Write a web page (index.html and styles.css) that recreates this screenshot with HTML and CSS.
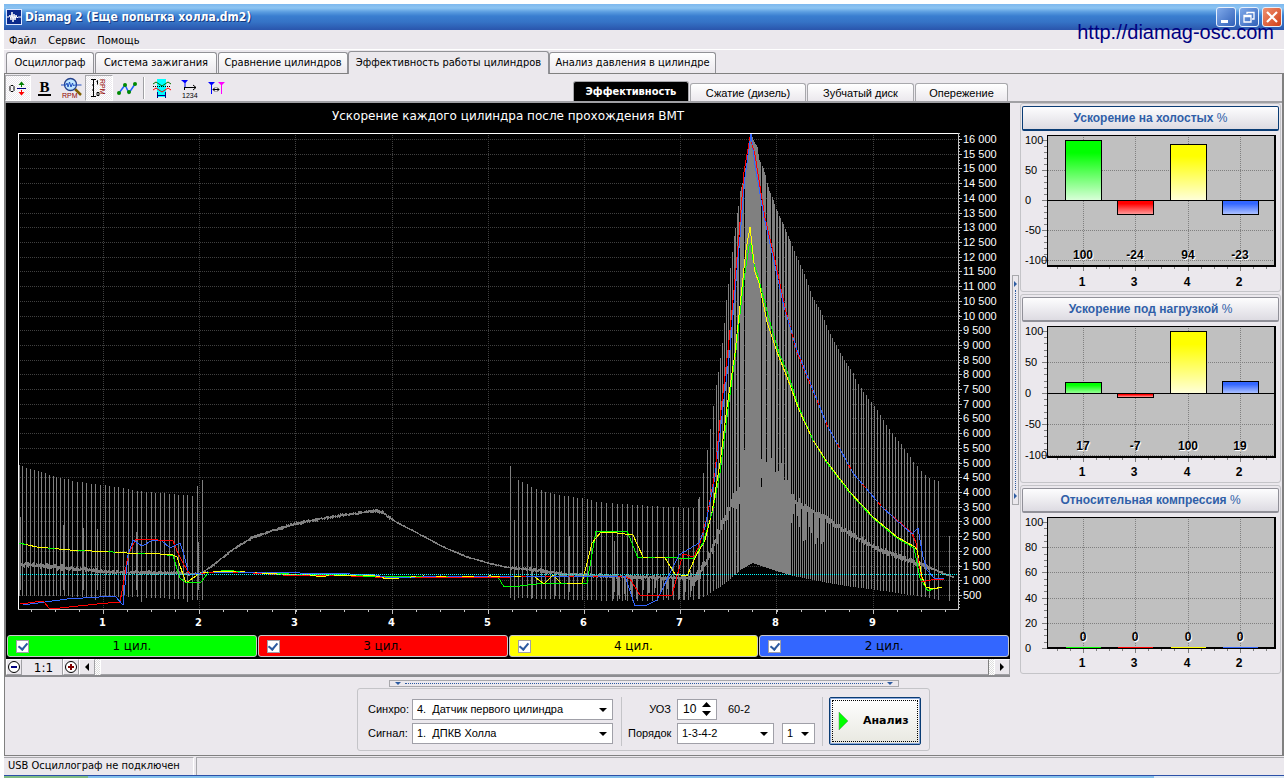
FILE: index.html
```html
<!DOCTYPE html>
<html lang="ru">
<head>
<meta charset="utf-8">
<title>Diamag 2</title>
<link rel="stylesheet" href="styles.css">
</head>
<body>
<div class="window">
  <header class="titlebar">
    <svg class="app-icon" width="16" height="16" viewBox="0 0 16 16"><rect width="16" height="16" fill="#dfe8ff"/><rect x="1" y="1" width="14" height="14" fill="#0a2a8c"/><path d="M1 8h2l1-2 1 5 1-8 1 10 1-8 1 6 1-5 1 3 1-1h3" fill="none" stroke="#fff"/></svg>
    <h1 class="title">Diamag 2 (Еще попытка холла.dm2)</h1>
    <div class="win-buttons">
      <button class="win-btn" aria-label="Свернуть"><svg width="18" height="18" viewBox="0 0 18 18"><path d="M4 12h7v3H4z" fill="#fff"/></svg></button>
      <button class="win-btn" aria-label="Восстановить"><svg width="18" height="18" viewBox="0 0 18 18"><path d="M7 6V4.500h7V11h-2M4 7.500h7V14H4zM4 8.500h7" fill="none" stroke="#fff" stroke-width="1.300"/></svg></button>
      <button class="win-btn win-close" aria-label="Закрыть"><svg width="18" height="18" viewBox="0 0 18 18"><path d="M4 4l10 10M14 4L4 14" stroke="#fff" stroke-width="2.200"/></svg></button>
    </div>
    <a class="site-link" href="#">http://diamag-osc.com</a>
  </header>

  <nav class="menu">
    <button>Файл</button><button>Сервис</button><button>Помощь</button>
  </nav>

  <nav class="tabs">
    <button class="tab tab-s">Осциллограф</button>
    <button class="tab tab-m">Система зажигания</button>
    <button class="tab tab-l">Сравнение цилиндров</button>
    <button class="tab tab-active">Эффективность работы цилиндров</button>
    <button class="tab tab-xl">Анализ давления в цилиндре</button>
  </nav>

  <main class="page">
    <div class="toolbar">
      <div class="tools">
        <button class="tool pressed" aria-label="Ноль"><svg width="18" height="22" viewBox="0 0 18 22"><path d="M2 8.500h2l1 1v4l-1 1H2l-1-1v-4z" fill="none" stroke="#000"/><path d="M8 11.500h9" stroke="#000080"/><path d="M12.500 10V6" stroke="#008000"/><path d="M9.500 8l3-3.500 3 3.500z" fill="#008000"/><path d="M12.500 13v4" stroke="red"/><path d="M9.500 15l3 3.500 3-3.500z" fill="red"/></svg></button>
        <button class="tool tool-b" aria-label="Жирный"><span class="bold-b">B</span></button>
        <button class="tool tool-wide" aria-label="Масштаб оборотов"><svg width="22" height="22" viewBox="0 0 22 22"><path d="M14 12l6 6" stroke="#806000" stroke-width="2.500"/><circle cx="9.500" cy="7.500" r="6" fill="#bfe6ff" stroke="#24408c" stroke-width="1.300"/><path d="M0 8h5l1-2 1 4 1.500-5 1.500 5 1.500-4 1 3 1-1h7" fill="none" stroke="#2050c0"/><text x="1" y="21" class="rpm">RPM</text></svg></button>
        <button class="tool tool-scale pressed" aria-label="Шкала оборотов"><svg width="18" height="22" viewBox="0 0 18 22"><path d="M1 2.500h5M1 19.500h5M3.500 3v16M2 8h1.500M2 13h1.500" stroke="#000" fill="none"/><path d="M6.500 4.500l1-1v4M7 15.500h2v3H7z" fill="none" stroke="#000"/><text x="2" y="-10" transform="rotate(90)" class="rpm">RPM</text></svg></button>
        <button class="tool tool-wide" aria-label="Точки"><svg width="22" height="22" viewBox="0 0 22 22"><path d="M3 16L9 8l4 8 6-9" fill="none" stroke="#2060ff" stroke-width="1.500"/><g fill="#008a00"><circle cx="3" cy="16" r="2"/><circle cx="9" cy="8" r="2"/><circle cx="13" cy="15" r="2"/><circle cx="19" cy="7" r="2"/></g></svg></button>
        <span class="tool-sep"></span>
        <button class="tool tool-wide" aria-label="Период"><svg width="20" height="22" viewBox="0 0 20 22"><rect x="5" y="2" width="9" height="18" fill="#0ff"/><path d="M1 7l3-2 3 2 3 2 3-2 3-2 3 2" fill="none" stroke="#007000"/><path d="M1 13l3-2 3 2 3 2 3-2 3-2 3 2" fill="none" stroke="red"/><path d="M1 9.500h18" stroke="#000" stroke-dasharray="1 1"/><path d="M5.500 15v6M13.500 15v6M6 18.500h7" stroke="#000080" fill="none"/></svg></button>
        <button class="tool tool-wide" aria-label="Порядок цилиндров"><svg width="20" height="22" viewBox="0 0 20 22"><path d="M2 3h7L6.500 6v5h-1V6z" fill="#00f"/><path d="M5.500 10v3M6 10.500h11M14 8l3 2.500-3 2.500" stroke="#000" fill="none"/><text x="3" y="21" class="tiny">1234</text></svg></button>
        <button class="tool tool-wide" aria-label="Маркеры"><svg width="20" height="22" viewBox="0 0 20 22"><path d="M2 5h7L6 8v9H5V8z" fill="#00f"/><path d="M12 5h7l-3 3v9h-1V8z" fill="#f0f"/><path d="M7 12.500h6M9 10.500l-2 2 2 2M11 10.500l2 2-2 2" fill="none" stroke="#000"/></svg></button>
      </div>
      <div class="subtabs">
        <button class="subtab subtab-active">Эффективность</button>
        <button class="subtab subtab-wide">Сжатие (дизель)</button>
        <button class="subtab">Зубчатый диск</button>
        <button class="subtab subtab-short">Опережение</button>
      </div>
    </div>

    <div class="workspace">
      <section class="chart-col">
        <div class="chart-box">
          <svg id="main-chart" class="main-chart" viewBox="6 103 1004 531"></svg>
          <div class="legend">
            <label class="cyl cyl-green"><input type="checkbox" checked><span>1 цил.</span></label>
            <label class="cyl cyl-red"><input type="checkbox" checked><span>3 цил.</span></label>
            <label class="cyl cyl-yellow"><input type="checkbox" checked><span>4 цил.</span></label>
            <label class="cyl cyl-blue"><input type="checkbox" checked><span>2 цил.</span></label>
          </div>
        </div>
        <div class="scroll-row">
          <button class="sq" aria-label="Уменьшить"><svg width="14" height="14" viewBox="0 0 14 14"><circle cx="7" cy="7" r="5.500" fill="#fff" stroke="#000"/><path d="M4 7h6" stroke="#000080" stroke-width="2"/></svg></button>
          <span class="ratio">1:1</span>
          <button class="sq" aria-label="Увеличить"><svg width="14" height="14" viewBox="0 0 14 14"><circle cx="7" cy="7" r="5.500" fill="#fff" stroke="#000"/><path d="M4 7h6M7 4v6" stroke="#800000" stroke-width="2"/></svg></button>
          <button class="sq" aria-label="Влево"><svg width="8" height="8" viewBox="0 0 8 8"><path d="M6 0v8L2 4z"/></svg></button>
          <div class="track"><div class="thumb"></div></div>
          <button class="sq" aria-label="Вправо"><svg width="8" height="8" viewBox="0 0 8 8"><path d="M2 0v8l4-4z"/></svg></button>
        </div>
      </section>

      <div class="vsplit"><div class="vgrip"><i class="arrow-r"></i><i class="vdots"></i><i class="arrow-r"></i></div></div>

      <aside class="side">
        <section class="card">
          <button class="card-btn card-btn-focus">Ускорение на холостых <span>%</span></button>
          <svg class="mini" viewBox="2 1 257 158" data-top="5" data-bottom="136" data-y100="10" data-zero="70" data-min="-100" data-step="50" data-values="100,-24,94,-23"></svg>
        </section>
        <section class="card">
          <button class="card-btn">Ускорение под нагрузкой <span>%</span></button>
          <svg class="mini" viewBox="2 2 257 158" data-top="6" data-bottom="137" data-y100="11" data-zero="73" data-min="-100" data-step="50" data-values="17,-7,100,19"></svg>
        </section>
        <section class="card">
          <button class="card-btn">Относительная компрессия <span>%</span></button>
          <svg class="mini" viewBox="2 2 257 158" data-top="6" data-bottom="137" data-y100="11" data-zero="137" data-min="0" data-step="20" data-values="0,0,0,0"></svg>
        </section>
      </aside>
    </div>

    <div class="hsplit"><i class="arrow-d"></i><i class="hdots"></i><i class="arrow-d"></i></div>

    <form class="controls">
      <div class="signals">
        <label for="sync">Синхро:</label>
        <span class="pick"><select id="sync"><option>4.&nbsp; Датчик первого цилиндра</option></select></span>
        <label for="signal">Сигнал:</label>
        <span class="pick"><select id="signal"><option>1.&nbsp; ДПКВ Холла</option></select></span>
      </div>
      <div class="params">
        <div class="param-row">
          <label for="uoz">УОЗ</label>
          <span class="spin"><input id="uoz" type="text" value="10"><svg width="9" height="14" viewBox="0 0 9 14"><path d="M0 5h9L4.500 0zM0 9h9l-4.500 5z"/></svg></span>
          <span class="note">60-2</span>
        </div>
        <div class="param-row">
          <label for="order">Порядок</label>
          <span class="pick pick-order"><select id="order"><option>1-3-4-2</option></select></span>
          <span class="pick pick-first"><select aria-label="Первый цилиндр"><option>1</option></select></span>
        </div>
      </div>
      <button type="button" class="analyze"><svg width="12" height="20" viewBox="0 0 12 20"><path d="M1 1v18l9-9z" fill="#0f0" stroke="#6a8a6a" stroke-width="0.500"/></svg><span>Анализ</span></button>
    </form>
  </main>

  <footer class="status"><span class="status-main">USB Осциллограф не подключен</span><span class="status-rest"></span></footer>
  <div class="taskbar"><i class="start"></i><i class="tray"></i></div>
</div>
<script src="chart.js"></script>
</body>
</html>
```
FILE: styles.css
```css
* { box-sizing: border-box; }
body {
  margin: 0;
  padding: 4px 4px 0;
  background: #fff;
  color: #000;
  font: 11px/14px "DejaVu Sans Condensed", "DejaVu Sans", sans-serif;
}
button, select, input { font: inherit; color: inherit; margin: 0; padding: 0; }
button { border: 0; background: none; }
svg { display: block; }
.window { display: flex; flex-direction: column; min-height: calc(100vh - 4px); background: #ebe8ed; }

.titlebar {
  position: relative;
  display: flex;
  align-items: center;
  height: 26px;
  padding: 0 2px 0 2px;
  background: linear-gradient(#7db8ee 0, #8cc4f2 4px, #5a9ce0 8px, #3a7ed0 12px, #3573c6 18px, #2a55ac 26px);
}
.title { flex: 1; margin: 0 0 0 3px; color: #fff; font-size: 12px; font-weight: bold; line-height: 16px; text-shadow: 1px 1px #153a80; }
.win-buttons { display: flex; gap: 3px; }
.win-btn { width: 20px; height: 20px; border: 1px solid #e8f0fc; border-radius: 3px; background: linear-gradient(135deg, #80aaea, #3060b8); }
.win-close { background: linear-gradient(135deg, #f09070, #d04018); }
.site-link { position: absolute; right: 10px; top: 17px; color: #000080; font: 20px/22px "Liberation Sans", sans-serif; text-decoration: none; }

.menu { display: flex; gap: 12px; height: 20px; padding: 2px 5px 0; border-bottom: 1px solid #fff; }

.tabs { display: flex; align-items: flex-end; gap: 1px; height: 24px; padding-left: 2px; border-bottom: 1px solid #808080; }
.tab { flex: none; height: 21px; border: 1px solid #919196; border-bottom: 0; border-radius: 3px 3px 0 0; background: linear-gradient(#fff, #ebe8ed); white-space: nowrap; }
.tab-s { width: 88px; }
.tab-m { width: 122px; }
.tab-l { width: 130px; }
.tab-xl { width: 167px; }
.tab-active { width: 201px; height: 23px; margin: 0 -1px -1px; background: #ebe8ed; }

.page { flex: 1; border: 1px solid #808080; border-width: 0 2px 1px 1px; }
.toolbar { display: flex; align-items: flex-end; height: 29px; border-bottom: 2px solid #a0a0a4; }
.tools { display: flex; align-items: center; width: 568px; height: 27px; }
.tool { display: flex; align-items: center; justify-content: center; width: 26px; height: 26px; }
.tool-wide { width: 27px; }
.tool-scale { width: 28px; }
.tool-b { width: 27px; }
.pressed { border: 1px solid #a8a8ac; border-color: #a8a8ac #fff #fff #a8a8ac; background: repeating-conic-gradient(#fff 0 25%, #ebe8ed 0 50%) 0 0 / 2px 2px; }
.bold-b { width: 13px; border-bottom: 2px solid #000; font: bold 15px/14px "Liberation Serif", serif; }
.rpm { font: 7px "Liberation Sans", sans-serif; fill: #900000; }
.tiny { font: 7px "Liberation Sans", sans-serif; }
.tool-sep { width: 2px; height: 22px; margin: 0 3px; border-left: 1px solid #a0a0a4; border-right: 1px solid #fff; }
.subtabs { display: flex; align-items: flex-end; gap: 1px; }
.subtab { width: 107px; height: 18px; border: 1px solid #a8a8ac; border-bottom: 0; border-radius: 3px 3px 0 0; background: linear-gradient(#fff, #ebe8ed); font-family: "Liberation Sans", sans-serif; }
.subtab-wide { width: 116px; }
.subtab-short { width: 93px; }
.subtab-active { width: 116px; height: 20px; background: #000; color: #fff; font: bold 11px/14px "DejaVu Sans Condensed", sans-serif; }

.workspace { display: grid; grid-template-columns: minmax(0, 1fr) 10px 262px; }
.chart-col { border-left: 1px solid #808080; border-bottom: 2px solid #8c8c90; }
.chart-box { background: #000; padding-bottom: 1px; }
.main-chart { width: 100%; height: auto; }
.y-label { font: 11px "Liberation Sans", sans-serif; fill: #fff; }
.x-label { font: bold 11px "DejaVu Sans Condensed", sans-serif; fill: #fff; text-anchor: middle; }
.chart-title { font: 12px "DejaVu Sans", sans-serif; fill: #fff; text-anchor: middle; }
.legend { display: grid; grid-template-columns: repeat(4, 1fr); gap: 1px; padding: 1px; }
.cyl { display: flex; align-items: center; height: 22px; padding: 0 8px; border: 1px solid #c8c8c8; border-radius: 3px; font: 12px/14px "DejaVu Sans", sans-serif; }
.cyl span { flex: 1; margin-right: 13px; text-align: center; }
.cyl input { appearance: none; width: 13px; height: 13px; border: 1px solid #a0a0a8; background: #fff; display: grid; place-items: center; }
.cyl input:checked::before { content: ""; width: 4px; height: 7px; margin-top: -2px; border: solid #2c5aa0; border-width: 0 2px 2px 0; transform: rotate(40deg); }
.cyl-green { background: #0f0; }
.cyl-red { background: #f00; }
.cyl-yellow { background: #ff0; }
.cyl-blue { background: #36f; }

.scroll-row { display: flex; height: 16px; background: #ebe8ed; }
.sq { display: flex; align-items: center; justify-content: center; width: 16px; height: 16px; border: 1px solid #fff; border-right-color: #a0a0a4; border-bottom-color: #a0a0a4; }
.ratio { width: 41px; padding-left: 3px; border-right: 1px solid #a0a0a4; text-align: center; font: 12px/18px "DejaVu Sans", sans-serif; }
.track { flex: 1; padding: 0 5px; background: repeating-conic-gradient(#fff 0 25%, #ddd 0 50%) 0 0 / 2px 2px; }
.thumb { height: 16px; border: 1px solid #fff; border-right-color: #808080; border-bottom-color: #a0a0a4; background: #ebe8ed; }

.vsplit { display: flex; align-items: center; justify-content: center; }
.vgrip { display: flex; flex-direction: column; align-items: center; justify-content: space-between; width: 7px; height: 230px; padding: 5px 0; border: 1px solid #a8a8ac; }
.vdots { flex: 1; margin: 3px 0; border-left: 1px dotted #2c5aa0; }
.arrow-r { border: 3px solid transparent; border-left-color: #2c5aa0; border-right: 0; }

.side { display: flex; flex-direction: column; gap: 2px; padding-right: 1px; }
.card { border: 1px solid #c4c4c8; border-radius: 3px; padding: 2px 1px 0; height: 189px; }
.card-btn { display: block; width: 100%; height: 25px; border: 1px solid #909098; border-bottom-width: 2px; border-radius: 2px; background: linear-gradient(#fdfdfe, #dddbe2); color: #305fa8; font: bold 12px/16px "Liberation Sans", sans-serif; }
.card-btn span { font-weight: normal; }
.card-btn-focus { border: 1px solid #0a3c74; border-bottom-width: 2px; }
.mini { width: 100%; height: auto; }
.m-axis { font: 11px "Liberation Sans", sans-serif; }
.m-cat { font: bold 12px "Liberation Sans", sans-serif; text-anchor: middle; }
.m-val { font: bold 12px "Liberation Sans", sans-serif; text-anchor: middle; text-shadow: 1px 1px #fff; }

.hsplit { display: flex; align-items: center; width: 510px; height: 7px; margin: 3px auto 1px; padding: 0 5px; border: 1px solid #a8a8ac; }
.hdots { flex: 1; margin: 0 4px; border-top: 1px dotted #2c5aa0; }
.arrow-d { border: 3px solid transparent; border-top-color: #2c5aa0; border-bottom: 0; }

.controls { display: flex; align-items: center; width: max-content; height: 63px; margin: 0 auto 4px; padding: 3px 8px 0 10px; border: 1px solid #c4c4c8; border-radius: 3px; font-family: "Liberation Sans", sans-serif; }
.signals { display: grid; grid-template-columns: 44px 201px; row-gap: 3px; align-items: center; padding-right: 8px; }
.params { display: flex; flex-direction: column; gap: 3px; width: 202px; padding: 2px 0 2px 6px; border: solid #c4c4c8; border-width: 0 1px; }
.param-row { display: flex; align-items: center; }
.param-row label { width: 49px; padding-right: 6px; text-align: right; white-space: nowrap; }
.pick { position: relative; display: block; height: 21px; }
.pick select { appearance: none; display: block; width: 100%; height: 21px; padding: 0 4px; border: 1px solid #a0a0a8; border-radius: 0; background: #fff; }
.pick::after { content: ""; position: absolute; right: 6px; top: 9px; border: 4px solid transparent; border-top-color: #000; border-bottom: 0; pointer-events: none; }
.pick-order { width: 97px; margin-right: 8px; }
.pick-first { width: 33px; }
.spin { display: flex; align-items: center; width: 40px; height: 21px; border: 1px solid #a0a0a8; background: #fff; }
.spin input { width: 24px; border: 0; padding-left: 5px; background: none; font-size: 12px; outline: 0; }
.note { padding-left: 11px; }
.analyze { display: flex; align-items: center; gap: 13px; width: 92px; height: 48px; margin-left: 6px; padding-left: 8px; border: 1px solid #0a3c74; border-radius: 2px; background: linear-gradient(#fff, #e8e8e0); box-shadow: inset 0 0 0 1px #8aa8dc; outline: 1px dotted #000; outline-offset: -4px; font: bold 11px/14px "DejaVu Sans", sans-serif; }

.status { display: flex; gap: 2px; height: 19px; padding-top: 1px; }
.status-main { width: 190px; padding: 0 4px; border: solid; border-width: 1px 1px 0 0; border-color: #a8a8ac #fff; line-height: 16px; }
.status-rest { flex: 1; border: solid #a8a8ac; border-width: 1px 0 0 1px; }
.taskbar { display: flex; height: 4px; border-top: 1px solid #2c50a8; background: #84c0ec; }
.start { width: 84px; background: #80bc84; }
.tray { width: 130px; margin-left: auto; background: #dce8f4; }
```
FILE: chart.js
```javascript
const NS = 'http://www.w3.org/2000/svg';

function add(parent, tag, attrs, text) {
  const node = document.createElementNS(NS, tag);
  for (const key in attrs) node.setAttribute(key, attrs[key]);
  if (text !== undefined) node.textContent = text;
  parent.appendChild(node);
  return node;
}

function at(points, x) {
  if (x <= points[0][0]) return points[0][1];
  for (let i = 1; i < points.length; i++) {
    const [x0, y0] = points[i - 1];
    const [x1, y1] = points[i];
    if (x <= x1) return y0 + (y1 - y0) * (x - x0) / (x1 - x0);
  }
  return points[points.length - 1][1];
}

// Repeatable noise for the raw sensor trace.
let seed = 7;
function rnd() {
  seed = (seed * 16807) % 2147483647;
  return seed / 2147483647;
}

function drawMain(svg) {
  const L = 18, R = 958, T = 133, B = 609;
  add(svg, 'text', { x: 508, y: 120, class: 'chart-title' }, 'Ускорение каждого цилиндра после прохождения ВМТ');

  const plot = add(svg, 'g', { 'shape-rendering': 'crispEdges', fill: 'none' });
  let grid = '', ticks = '';
  for (let i = 1; i <= 32; i++) {
    const y = Math.round(595 - (i - 1) * 14.71) + 0.5;
    grid += `M${L} ${y}H${R}`;
    ticks += `M${R} ${y}h4`;
    add(svg, 'text', { x: 963, y: y + 3.5, class: 'y-label' },
      String(i * 500).replace(/(\d)(\d{3})$/, '$1 $2'));
  }
  for (let y = B - 2.5; y > T; y -= 2.94) ticks += `M${R} ${Math.round(y) + 0.5}h2`;
  for (let i = 1; i <= 9; i++) {
    const x = Math.round(103 + (i - 1) * 96.2) + 0.5;
    grid += `M${x} ${T}V${B}`;
    ticks += `M${x} ${B}v5`;
    add(svg, 'text', { x: x - 1, y: 626, class: 'x-label' }, i);
  }
  for (let x = 31; x < R; x += 24.05) ticks += `M${Math.round(x) + 0.5} ${B}v3`;
  add(plot, 'path', { d: grid, stroke: '#404040', 'stroke-dasharray': '1 1' });

  const tops = [[19, 465], [31, 469], [54, 476], [79, 482], [117, 487], [137, 491], [160, 493], [194, 496],
    [196, 496], [197.5, 484], [202, 480], [510, 466], [514, 520], [518, 480], [537, 489], [557, 495],
    [588, 499], [597, 502], [650, 506], [694, 508], [697, 508], [699, 497], [703, 473], [707, 450],
    [710, 429], [713, 406], [716, 385], [719, 366], [723, 335], [726, 300], [729, 276], [733, 244],
    [736, 220], [738, 206], [740, 191], [742, 183], [744, 172], [747, 160], [749, 141], [751, 134],
    [753, 140], [757, 147], [759, 160], [763, 168], [766, 179], [769, 191], [772, 197], [775, 207],
    [782, 222], [790, 241], [797, 258], [802, 269], [807, 282], [812, 297], [821, 312], [827, 328],
    [833, 340], [843, 358], [853, 373], [860, 387], [873, 404], [888, 428], [900, 443], [914, 463],
    [927, 477], [940, 482]];
  const bottoms = [[19, 596], [133, 597], [202, 600], [510, 598], [620, 601], [697, 600], [707, 595],
    [720, 587], [729, 580], [740, 570], [752, 563], [773, 570], [793, 576], [823, 582], [853, 587],
    [890, 592], [917, 596], [940, 600]];
  let bars = '';
  const bar = (x, top, bottom) => {
    bars += `M${Math.floor(x) + 0.5} ${Math.round(top)}V${Math.round(bottom)}`;
  };
  for (let x = 19; x < 200; x += x < 65 ? 3.8 : 4.6) bar(x, at(tops, x), at(bottoms, x));
  bar(202, 480, 600);
  for (const [x, y] of [[20, 517], [63, 525], [83, 528], [97, 529], [136, 532], [160, 534], [198, 542]]) bar(x, y, 590);
  bar(510, 466, 598);
  bar(514, 520, 600);
  for (let x = 518; x < 700; x += x < 590 ? 4.6 : 5.1) bar(x, at(tops, x), at(bottoms, x));
  for (const [x, y] of [[550, 535], [569, 536], [614, 541]]) bar(x, y, 592);
  for (const x of [699, 703, 707, 710, 713, 716, 718, 720, 722, 724, 726, 728, 730, 732, 734, 735, 737, 738, 740]) {
    bar(x, at(tops, x), at(bottoms, x));
  }
  // Narrow gaps stay visible between the dense bars of the peak.
  const gaps = [744, 761, 766, 771, 775, 778, 781, 784, 787];
  for (let x = 741; x < 790; x++) {
    const top = at(tops, x);
    const bottom = at(bottoms, x);
    if (gaps.includes(x)) bar(x, 450 + rnd() * 40, bottom);
    else bar(x, top, bottom);
  }
  for (let x = 790; x < 942; x += x < 848 ? 2 : x < 873 ? 2.6 : x < 912 ? 3 : 4.2) {
    bar(x, at(tops, x), at(bottoms, x));
  }
  bar(949, 536, 601);
  add(plot, 'path', { d: bars, stroke: '#808080' });

  const mid = [[19, 564], [67, 568], [110, 572], [167, 573], [200, 574], [213, 565], [233, 549], [253, 537],
    [277, 529], [293, 524], [330, 517], [350, 514], [373, 511], [382, 512], [392, 520], [417, 533],
    [443, 547], [467, 557], [488, 563], [505, 567], [543, 571], [563, 574], [630, 577], [697, 578],
    [707, 560], [717, 537], [727, 513], [737, 493], [745, 478], [760, 465], [775, 480], [790, 500],
    [820, 515], [847, 532], [873, 547], [907, 560], [927, 567], [953, 577]];
  let raw = '', smooth = '';
  for (let x = 19; x < 954; x++) {
    const y = at(mid, x);
    const amp = x < 65 ? 3 : x < 190 ? 2 : x < 250 ? 1 : x < 395 ? 1.6 : x < 510 ? 0.6 : x < 690 ? 2 : x < 800 ? 8 : x < 930 ? 3 : 1;
    raw += `M${x + 0.5} ${(y - amp * rnd() - 0.5).toFixed(1)}V${(y + amp * rnd() + 0.5).toFixed(1)}`;
    if (((x > 25 && x < 200) || (x > 515 && x < 560)) && x % 23 === 3) raw += `M${x} ${y}v${15 + rnd() * 15}`;
    if (x > 610 && x < 696 && x % 6 < 2) raw += `M${x} ${y}v${10 + rnd() * 14}`;
    if (x > 735 && x < 826 && x % 3) raw += `M${x + 0.5} ${y}v${10 + rnd() * 25}`;
    smooth += `${smooth ? 'L' : 'M'}${x} ${y.toFixed(1)}`;
  }
  add(plot, 'path', { d: raw, stroke: '#808080' });
  add(plot, 'path', { d: smooth, stroke: '#808080' });

  const green = '19,543 37,547 70,550 113,552 127,553 160,554 173,556 180,578 185,582 201,582 208,573 227,570 240,572 277,573 300,575 330,574 380,577 395,576 440,576 498,577 504,587 520,586 537,584 587,583 596,531 617,532 627,531 638,558 665,557 677,558 694,558 703,543 712,513 720,473 727,417 736,350 743,287 749,246 751,243 753,260 759,280 767,311 773,333 780,356 787,371 799,408 813,440 827,463 850,493 873,518 897,538 914,548 920,578 928,591 933,589';
  const yellow = '19,543 37,547 70,550 113,552 127,553 160,554 173,555 177,557 186,583 200,573 213,572 233,571 257,573 277,574 310,575 322,577 330,575 373,575 387,579 423,576 457,577 490,576 535,577 544,584 553,575 562,584 582,583 592,543 601,532 617,533 633,535 643,557 665,558 675,574 687,576 695,558 705,540 712,512 720,463 727,407 735,353 742,287 746,250 750,227 755,272 759,283 767,322 777,352 787,377 799,410 813,440 827,462 850,492 873,517 897,537 915,547 917,550 922,577 926,587 933,589 942,587';
  const red = '20,604 43,601 50,609 60,608 97,604 120,602 124,580 128,555 136,539 143,539 173,541 178,553 183,563 190,575 213,572 253,573 283,575 327,575 375,577 440,577 510,577 560,576 623,576 630,579 640,595 672,595 683,554 694,557 700,543 707,517 715,473 721,410 728,350 734,290 739,235 744,172 750,137 755,155 765,218 775,260 785,308 797,352 821,410 827,425 853,473 870,493 883,508 912,533 916,543 922,582 935,579 944,579';
  const blue = '23,605 67,599 115,596 123,605 128,555 133,540 142,546 153,540 162,541 170,548 180,543 184,555 189,575 207,572 300,573 350,574 375,575 390,578 440,576 520,577 560,576 625,576 635,606 647,605 657,600 679,555 699,543 705,527 715,477 723,407 730,350 735,292 740,237 745,177 751,134 755,165 764,217 773,257 784,307 797,350 821,410 827,425 853,473 870,493 883,508 912,534 918,528 923,557 927,570 935,579 944,578';
  for (const [points, color] of [[red, '#f00'], [green, '#0f0'], [blue, '#36f'], [yellow, '#ff0']]) {
    add(plot, 'polyline', { points, stroke: color });
  }
  add(plot, 'polyline', { points: green, stroke: '#0f0', 'stroke-dasharray': '7 23' });
  add(plot, 'polyline', { points: red, stroke: '#f00', 'stroke-dasharray': '5 19' });
  add(plot, 'polyline', { points: blue.slice(blue.indexOf('189,575'), blue.indexOf('635,606')), stroke: '#36f', 'stroke-dasharray': '14 12' });
  add(plot, 'path', { d: `M${L} 574.5H${R}`, stroke: '#0ff', 'stroke-dasharray': '1 1' });
  add(plot, 'path', { d: `M${L} ${T + 0.5}H${R}M${L + 0.5} ${T}V${B}`, stroke: '#fff' });
  add(plot, 'path', { d: `M${L} ${B + 0.5}H${R}M${R + 0.5} ${T}V${B + 1}${ticks}`, stroke: '#c0c0c0' });
}

function drawMini(svg, index) {
  const d = svg.dataset;
  const top = +d.top, bottom = +d.bottom, zero = +d.zero;
  const scale = (zero - d.y100) / 100;
  const Y = v => Math.round(zero - v * scale) + 0.5;
  const centers = [63, 115, 168, 220];
  const colors = ['#00ff00', '#ff0000', '#ffff00', '#3366ff'];
  const g = add(svg, 'g', { 'shape-rendering': 'crispEdges' });
  add(g, 'rect', { x: 27, y: top, width: 229, height: bottom - top, fill: '#c0c0c0' });
  let grid = '', ticks = '';
  for (let v = +d.min; v <= 100; v += +d.step) {
    if (v < 100) grid += `M28 ${Y(v)}H255`;
    ticks += `M22 ${Y(v)}h5`;
    add(svg, 'text', { x: 5, y: Y(v) + 3.5, class: 'm-axis' }, v);
  }
  for (let i = 1; i < 20; i++) ticks += `M24 ${Y(+d.min + (100 - d.min) * i / 20)}h3`;
  for (const c of centers) {
    grid += `M${c + 0.5} ${top}V${bottom}`;
    ticks += `M${c + 0.5} ${bottom}v5`;
  }
  for (let x = 37; x < 252; x += 13.05) ticks += `M${Math.round(x) + 0.5} ${bottom}v3`;
  add(g, 'path', { d: grid, stroke: '#808080', 'stroke-dasharray': '1 1' });
  add(g, 'path', { d: ticks, stroke: '#808080' });
  add(g, 'path', { d: `M27 ${top + 0.5}H256M27.500 ${top}V${bottom}`, stroke: '#000', fill: 'none' });
  add(g, 'path', { d: `M255 ${top}V${bottom + 1}M27 ${bottom}H256`, stroke: '#000', 'stroke-width': 2 });
  if (zero < bottom) add(g, 'path', { d: `M27 ${zero + 0.5}H256`, stroke: '#000' });

  d.values.split(',').map(Number).forEach((v, i) => {
    const c = centers[i];
    const id = `fill-${index}-${i}`;
    const gradient = add(svg, 'linearGradient', { id, x1: 0, y1: 0, x2: 0, y2: 1 });
    add(gradient, 'stop', { offset: 0.2, 'stop-color': '#fff', 'stop-opacity': 0 });
    add(gradient, 'stop', { offset: 1, 'stop-color': '#fff', 'stop-opacity': v > 50 ? 0.85 : 0.6 });
    if (v) {
      const y0 = Math.min(Y(v), Y(0));
      const h = Math.abs(Y(v) - Y(0));
      add(g, 'rect', { x: c - 17.5, y: y0, width: 36, height: h, fill: colors[i], stroke: '#000' });
      add(g, 'rect', { x: c - 17, y: y0 + 0.5, width: 35, height: Math.max(1, h - 1), fill: `url(#${id})` });
    } else {
      add(g, 'rect', { x: c - 17, y: bottom - 1, width: 35, height: 1, fill: colors[i] });
    }
    add(svg, 'text', { x: c, y: top + 124, class: 'm-val' }, v);
    add(svg, 'text', { x: c - 1, y: 156, class: 'm-cat' }, [1, 3, 4, 2][i]);
  });
}

drawMain(document.getElementById('main-chart'));
document.querySelectorAll('.mini').forEach(drawMini);
```
